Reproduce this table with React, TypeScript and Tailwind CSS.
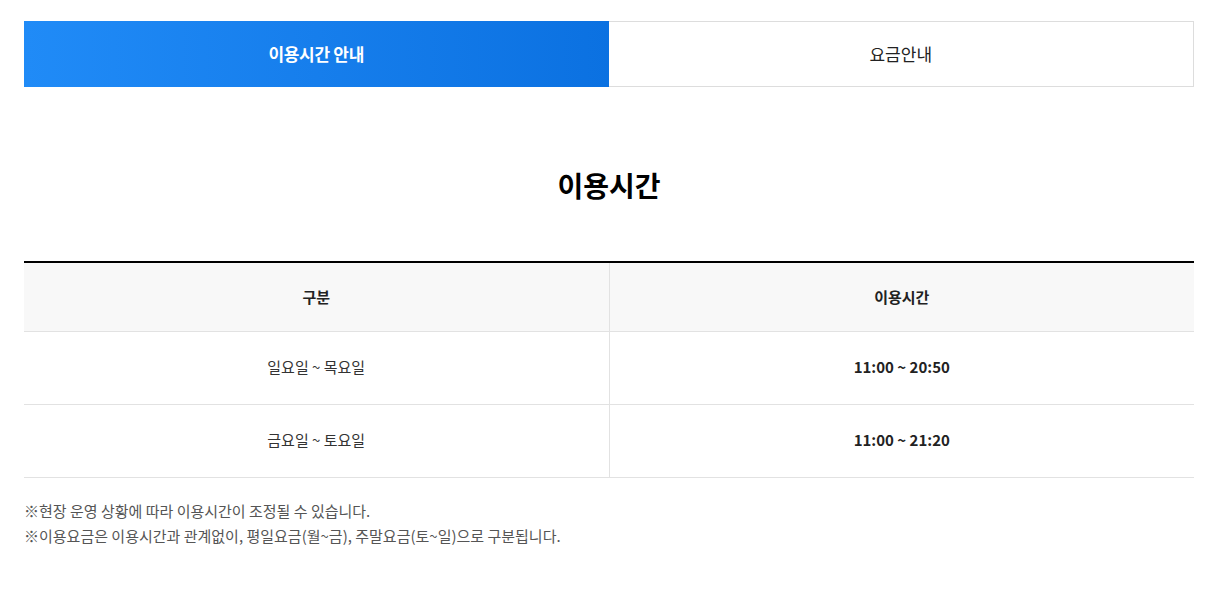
export default function App() {
  const rows = [
    { day: "일요일 ~ 목요일", time: "11:00 ~ 20:50" },
    { day: "금요일 ~ 토요일", time: "11:00 ~ 21:20" },
  ];
  return (
    <div
      className="w-full bg-white pt-[21px] pb-10"
      style={{ fontFamily: '"Noto Sans CJK KR", "Noto Sans", sans-serif' }}
    >
      <div className="ml-6 w-[1170px]">
        {/* tabs */}
        <div className="flex h-[66px]">
          <button className="flex-1 flex items-center justify-center bg-gradient-to-r from-[#208bf7] to-[#0b71e1] text-white text-[17px] font-bold tracking-[-0.3px]">
            이용시간 안내
          </button>
          <button className="flex-1 flex items-center justify-center border border-l-0 border-[#dddddd] text-[#222] text-[17px]">
            요금안내
          </button>
        </div>

        <h2 className="mt-[76px] text-center text-[28px] font-bold text-black leading-[44px]">
          이용시간
        </h2>

        <table className="mt-[54px] w-full border-collapse border-t-2 border-black text-[15px]">
          <thead>
            <tr className="bg-[#f8f8f8] h-[69px] border-b border-[#e2e2e2]">
              <th className="w-1/2 font-bold text-[#222] border-r border-[#e2e2e2]">구분</th>
              <th className="w-1/2 font-bold text-[#222]">이용시간</th>
            </tr>
          </thead>
          <tbody>
            {rows.map((r) => (
              <tr key={r.day} className="h-[73px] border-b border-[#e2e2e2]">
                <td className="text-center text-[#333] border-r border-[#e2e2e2]">{r.day}</td>
                <td className="text-center text-[#222] font-bold">{r.time}</td>
              </tr>
            ))}
          </tbody>
        </table>

        <div className="mt-[20px] text-[15px] text-[#555] leading-[25px]">
          <p>※현장 운영 상황에 따라 이용시간이 조정될 수 있습니다.</p>
          <p>※이용요금은 이용시간과 관계없이, 평일요금(월~금), 주말요금(토~일)으로 구분됩니다.</p>
        </div>
      </div>
    </div>
  );
}
